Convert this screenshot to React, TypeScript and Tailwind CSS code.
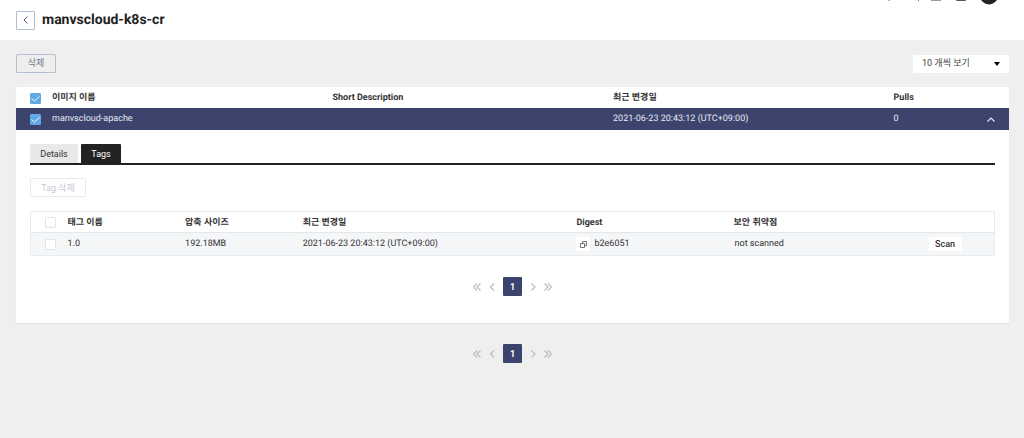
import { useState } from "react";

interface Tag {
  name: string;
  size: string;
  updatedAt: string;
  digest: string;
  status: string;
}

interface Image {
  name: string;
  description: string;
  updatedAt: string;
  pulls: number;
  tags: Tag[];
}

const IMAGES: Image[] = [
  {
    name: "manvscloud-apache",
    description: "",
    updatedAt: "2021-06-23 20:43:12 (UTC+09:00)",
    pulls: 0,
    tags: [
      {
        name: "1.0",
        size: "192.18MB",
        updatedAt: "2021-06-23 20:43:12 (UTC+09:00)",
        digest: "b2e6051",
        status: "not scanned",
      },
    ],
  },
];

export default function App() {
  const image = IMAGES[0];
  const [selected, setSelected] = useState(true);
  const [open, setOpen] = useState(true);

  return (
    <div className="min-h-screen bg-[#efefef] font-['Roboto','Noto_Sans_CJK_KR',sans-serif] text-[9px] leading-3 text-[#333] [text-rendering:geometricPrecision]">
      <Header title="manvscloud-k8s-cr" />

      <main className="pl-4 pr-[15px] pt-3.5">
        <div className="flex items-center justify-between mb-3.5">
          <button
            type="button"
            className="h-[19px] w-10 rounded-[1px] border border-[#b4bfcf] pb-px text-[#71798a]"
          >
            삭제
          </button>
          <PageSizeSelect />
        </div>

        <section className="bg-white rounded-[1px] shadow-[0_1px_1px_#e0e0e0]">
          <table className="w-full table-fixed text-left">
            <colgroup>
              <col className="w-9" />
              <col className="w-[28.25%]" />
              <col className="w-[28.25%]" />
              <col className="w-[28.25%]" />
              <col />
              <col className="w-9" />
            </colgroup>
            <thead>
              <tr className="h-[21px]">
                <th className="pl-3.5 pt-px">
                  <Checkbox label="전체 선택" checked={selected} onChange={setSelected} />
                </th>
                <th className="font-bold">이미지 이름</th>
                <th className="font-bold">Short Description</th>
                <th className="font-bold">최근 변경일</th>
                <th className="font-bold">Pulls</th>
                <th />
              </tr>
            </thead>
            <tbody>
              <tr className="h-[22px] bg-[#3c446e] text-[#e6e8f0]">
                <td className="pl-3.5">
                  <Checkbox label={image.name} checked={selected} onChange={setSelected} />
                </td>
                <td className="pb-px">{image.name}</td>
                <td className="pb-px">{image.description}</td>
                <td className="pb-px">{image.updatedAt}</td>
                <td className="pb-px">{image.pulls}</td>
                <td>
                  <button
                    type="button"
                    aria-label="상세 보기"
                    aria-expanded={open}
                    onClick={() => setOpen(!open)}
                    className="flex h-5 w-9 items-center justify-center"
                  >
                    <svg
                      className={open ? "h-[5px] w-2" : "h-[5px] w-2 rotate-180"}
                      viewBox="0 0 8 5"
                      fill="none"
                      stroke="currentColor"
                      strokeWidth="1.2"
                    >
                      <path d="M.5 4.5 4 1l3.5 3.5" />
                    </svg>
                  </button>
                </td>
              </tr>
            </tbody>
          </table>

          {open && <ImageDetail tags={image.tags} />}
        </section>

        <div className="mt-[21px]">
          <Pagination />
        </div>
      </main>
    </div>
  );
}

function Header({ title }: { title: string }) {
  return (
    <header className="flex h-10 items-start justify-between bg-white">
      <div className="flex h-10 items-center gap-[7px] pl-4">
        <button
          type="button"
          aria-label="뒤로"
          className="flex size-[19px] items-center justify-center rounded-[1px] border border-[#b4bfcf] text-[#4a5263]"
        >
          <svg className="h-2 w-[5px]" viewBox="0 0 5 8" fill="none" stroke="currentColor">
            <path d="M4.5.5 1 4l3.5 3.5" />
          </svg>
        </button>
        <h1 className="text-sm font-bold text-[#222]">{title}</h1>
      </div>

      {/* Lower edge of the toolbar that scrolls out of view */}
      <svg className="mr-6 h-[5px] w-[120px]" viewBox="0 0 120 5" fill="none" aria-hidden="true">
        <path d="M9 0v1M38.5 0v1" stroke="#777" />
        <path d="M51 .5h10" stroke="#999" />
        <path d="M76.5 0v.5h9V0" stroke="#555" />
        <circle cx="109" cy="-4.5" r="9" fill="#222" />
      </svg>
    </header>
  );
}

function PageSizeSelect() {
  return (
    <div className="flex h-[18px] w-24 items-center rounded-[1px] bg-white">
      <select
        aria-label="페이지 크기"
        className="h-full w-full appearance-none bg-transparent pb-px pl-[9px] text-[#444]"
      >
        <option>10 개씩 보기</option>
        <option>20 개씩 보기</option>
        <option>50 개씩 보기</option>
      </select>
      <svg className="pointer-events-none -ml-[15px] mr-[9px] h-1 w-1.5 shrink-0" viewBox="0 0 6 4">
        <path d="M0 0h6L3 4z" fill="#000" />
      </svg>
    </div>
  );
}

function ImageDetail({ tags }: { tags: Tag[] }) {
  const [tab, setTab] = useState<"details" | "tags">("tags");

  const tabClass = (active: boolean) =>
    `h-[19px] rounded-t-[1px] ${active ? "bg-[#222] text-white" : "bg-[#e8e8e8] text-[#333]"}`;

  return (
    <div className="px-3.5 pt-3.5 pb-[27px]">
      <div role="tablist" className="flex gap-[3px] border-b-2 border-[#222] mb-[13px]">
        <button
          type="button"
          role="tab"
          aria-selected={tab === "details"}
          onClick={() => setTab("details")}
          className={`w-12 ${tabClass(tab === "details")}`}
        >
          Details
        </button>
        <button
          type="button"
          role="tab"
          aria-selected={tab === "tags"}
          onClick={() => setTab("tags")}
          className={`w-10 ${tabClass(tab === "tags")}`}
        >
          Tags
        </button>
      </div>

      <button
        type="button"
        disabled
        className="mb-3.5 block h-[19px] w-14 rounded-[1px] border border-[#e6eaee] text-[#c5cad3]"
      >
        Tag 삭제
      </button>

      <TagTable tags={tags} />

      <div className="mt-[21px]">
        <Pagination />
      </div>
    </div>
  );
}

function TagTable({ tags }: { tags: Tag[] }) {
  const [checked, setChecked] = useState(false);

  return (
    <table className="w-full table-fixed border border-[#e9ecee] text-left">
      <colgroup>
        <col className="w-[37px]" />
        <col className="w-[12.2%]" />
        <col className="w-[12.2%]" />
        <col className="w-[28.4%]" />
        <col className="w-[16.3%]" />
        <col />
        <col className="w-[66px]" />
      </colgroup>
      <thead>
        <tr className="h-[21px]">
          <th className="pl-3.5 pt-px">
            <Checkbox label="전체 태그 선택" checked={checked} onChange={setChecked} />
          </th>
          <th className="pt-px font-bold">태그 이름</th>
          <th className="pt-px font-bold">압축 사이즈</th>
          <th className="pt-px font-bold">최근 변경일</th>
          <th className="pt-px font-bold">Digest</th>
          <th className="pt-px font-bold">보안 취약점</th>
          <th />
        </tr>
      </thead>
      <tbody>
        {tags.map((tag) => (
          <tr key={tag.name} className="h-[23px] border-t border-[#e4e7e9] bg-[#f5f6f8]">
            <td className="pl-3.5">
              <Checkbox label={tag.name} checked={checked} onChange={setChecked} />
            </td>
            <td className="pb-px">{tag.name}</td>
            <td className="pb-px">{tag.size}</td>
            <td className="pb-px">{tag.updatedAt}</td>
            <td>
              <div className="flex items-center gap-1">
                <button
                  type="button"
                  aria-label="Digest 복사"
                  className="flex size-3.5 items-center justify-center bg-white text-[#555]"
                >
                  <svg className="size-[7px]" viewBox="0 0 7 7" fill="none" stroke="currentColor">
                    <path d="M.5 2.5h4v4h-4zM2.5 2.5v-2h4v4h-2" strokeWidth=".8" />
                  </svg>
                </button>
                <span className="pb-px">{tag.digest}</span>
              </div>
            </td>
            <td className="pb-px pl-px">{tag.status}</td>
            <td>
              <button type="button" className="block h-3.5 w-[33px] rounded-[1px] bg-white font-medium">
                Scan
              </button>
            </td>
          </tr>
        ))}
      </tbody>
    </table>
  );
}

function Checkbox({
  label,
  checked,
  onChange,
}: {
  label: string;
  checked: boolean;
  onChange: (checked: boolean) => void;
}) {
  return (
    <span className="grid size-[11px]">
      <input
        type="checkbox"
        aria-label={label}
        checked={checked}
        onChange={(e) => onChange(e.target.checked)}
        className="col-start-1 row-start-1 size-[11px] appearance-none rounded-[1px] border border-[#e1e4e8] bg-white checked:border-[#62a9e3] checked:bg-[#62a9e3]"
      />
      {checked && (
        <svg
          className="pointer-events-none col-start-1 row-start-1 size-[11px]"
          viewBox="0 0 11 11"
          fill="none"
          stroke="#fff"
        >
          <path d="M1.5 5.5 4.5 8l5-4.5" strokeWidth=".9" />
        </svg>
      )}
    </span>
  );
}

function Pagination() {
  return (
    <nav aria-label="페이지" className="flex items-center justify-center gap-[7px] text-[#bbb]">
      <PageArrow label="처음" d="M4 .5.5 4 4 7.5M7.5.5 4 4l3.5 3.5" />
      <PageArrow label="이전" d="M6 .5 2.5 4 6 7.5" />
      <button
        type="button"
        aria-current="page"
        className="size-[19px] rounded-[1px] bg-[#3c446e] font-bold text-white"
      >
        1
      </button>
      <PageArrow label="다음" d="M2.5.5 6 4 2.5 7.5" />
      <PageArrow label="마지막" d="M.5.5 4 4 .5 7.5M4 .5 7.5 4 4 7.5" />
    </nav>
  );
}

function PageArrow({ label, d }: { label: string; d: string }) {
  return (
    <button type="button" aria-label={label}>
      <svg className="h-2 w-2" viewBox="0 0 8 8" fill="none" stroke="currentColor" strokeWidth="1.2">
        <path d={d} />
      </svg>
    </button>
  );
}
